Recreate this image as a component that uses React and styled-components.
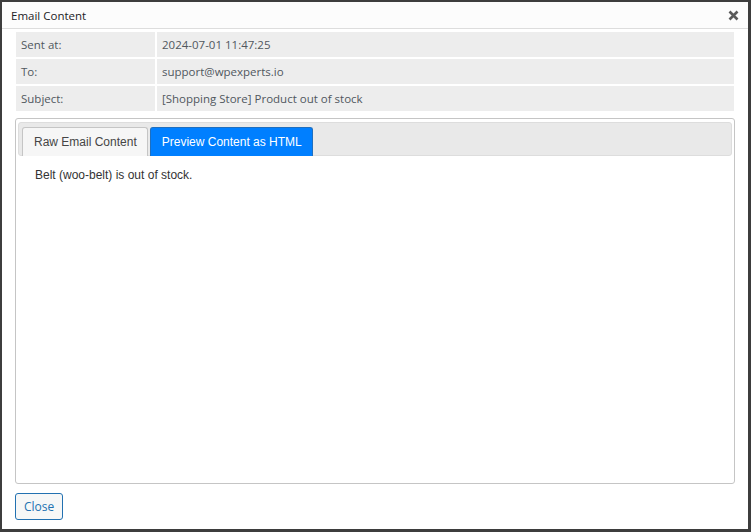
import React, { useState } from 'react';
import styled, { createGlobalStyle } from 'styled-components';

const GlobalStyle = createGlobalStyle`
  html, body {
    margin: 0;
    padding: 0;
    height: 100%;
    background: #3d3d3d;
  }
  #root {
    height: 100%;
  }
`;

const Backdrop = styled.div`
  height: 532px;
  padding: 2px 3px 3px 2px;
  box-sizing: border-box;
  display: flex;
`;

const Dialog = styled.div`
  flex: 1;
  display: flex;
  flex-direction: column;
  background: #fff;
  font-family: "Open Sans", "Noto Sans", sans-serif;
  color: #3c434a;
`;

const Header = styled.div`
  height: 26px;
  display: flex;
  align-items: center;
  justify-content: space-between;
  padding: 0 9px 0 9px;
  background: #fcfcfc;
  border-bottom: 1px solid #dddddd;
`;

const Title = styled.h1`
  margin: 0;
  font-size: 11.5px;
  font-weight: 400;
  color: #1d2327;
`;

const CloseIcon = styled.button`
  border: none;
  background: none;
  padding: 0;
  width: 12px;
  height: 12px;
  display: flex;
  align-items: center;
  justify-content: center;
  cursor: pointer;
`;

const Body = styled.div`
  flex: 1;
  display: flex;
  flex-direction: column;
  padding: 3px 13px 9px 13px;
`;

const InfoTable = styled.div`
  display: grid;
  grid-template-columns: 139px 1fr;
  grid-auto-rows: 25px;
  gap: 2px;
  padding: 0 1px;
`;

const Cell = styled.div`
  display: flex;
  align-items: center;
  padding-left: 5px;
  background: #ededed;
  font-size: 11.5px;
  line-height: 1;
  color: #50575e;
`;

const TabPanel = styled.div`
  flex: 1;
  margin-top: 7px;
  border: 1px solid #c5c5c5;
  border-radius: 3px;
  padding: 3px 2px;
  display: flex;
  flex-direction: column;
  font-family: "Liberation Sans", Arial, sans-serif;
`;

const TabBar = styled.div`
  height: 32px;
  display: flex;
  align-items: flex-end;
  gap: 2px;
  padding: 0 3px;
  background: #e9e9e9;
  border: 1px solid #dddddd;
  border-radius: 3px;
`;

const Tab = styled.button`
  height: 29px;
  margin-bottom: -1px;
  padding: 0 10px 0 11px;
  border: 1px solid ${(p) => (p.$active ? '#1f6fbf' : '#c5c5c5')};
  border-bottom: none;
  border-radius: 3px 3px 0 0;
  background: ${(p) => (p.$active ? '#007fff' : '#f6f6f6')};
  color: ${(p) => (p.$active ? '#ffffff' : '#454545')};
  font-family: "Liberation Sans", Arial, sans-serif;
  font-size: 12px;
  cursor: pointer;
`;

const TabContent = styled.div`
  padding: 12px 17px;
  font-size: 12px;
  color: #333333;
`;

const Footer = styled.div`
  margin-top: 9px;
  display: flex;
`;

const Button = styled.button`
  height: 27px;
  padding: 0 8px;
  border: 1px solid #2271b1;
  border-radius: 3px;
  background: #f6f7f7;
  color: #2271b1;
  font-family: "Open Sans", "Noto Sans", sans-serif;
  font-size: 12px;
  cursor: pointer;
`;

const rows = [
  ['Sent at:', '2024-07-01 11:47:25'],
  ['To:', 'support@wpexperts.io'],
  ['Subject:', '[Shopping Store] Product out of stock'],
];

export default function App() {
  const [tab, setTab] = useState('html');

  return (
    <>
      <GlobalStyle />
      <Backdrop>
        <Dialog>
          <Header>
            <Title>Email Content</Title>
            <CloseIcon aria-label="Close">
              <svg width="11" height="11" viewBox="0 0 11 11">
                <path d="M1.5 1.5 L9.5 9.5 M9.5 1.5 L1.5 9.5" stroke="#5a5a5a" strokeWidth="2.6" />
              </svg>
            </CloseIcon>
          </Header>
          <Body>
            <InfoTable>
              {rows.map(([label, value]) => (
                <React.Fragment key={label}>
                  <Cell>{label}</Cell>
                  <Cell>{value}</Cell>
                </React.Fragment>
              ))}
            </InfoTable>
            <TabPanel>
              <TabBar>
                <Tab $active={tab === 'raw'} onClick={() => setTab('raw')}>Raw Email Content</Tab>
                <Tab $active={tab === 'html'} onClick={() => setTab('html')}>Preview Content as HTML</Tab>
              </TabBar>
              <TabContent>Belt (woo-belt) is out of stock.</TabContent>
            </TabPanel>
            <Footer>
              <Button>Close</Button>
            </Footer>
          </Body>
        </Dialog>
      </Backdrop>
    </>
  );
}
